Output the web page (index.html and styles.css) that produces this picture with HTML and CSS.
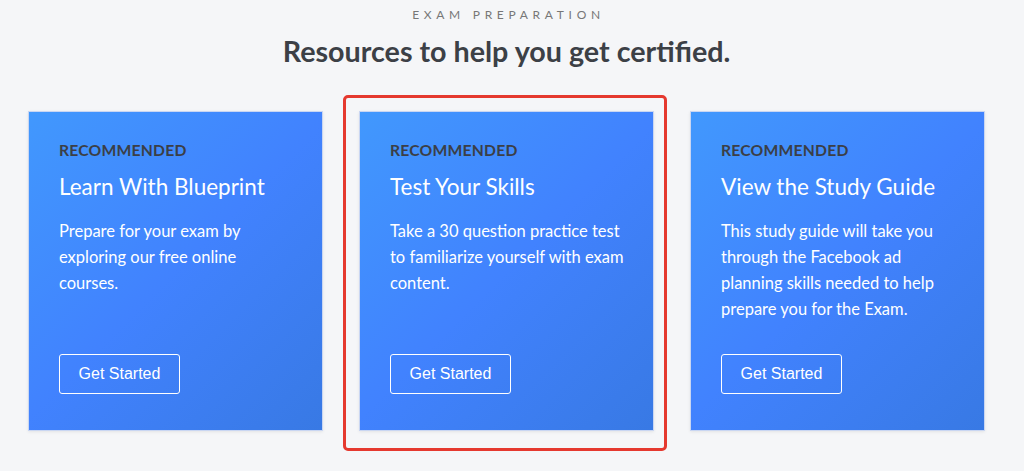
FILE: index.html
```html
<!DOCTYPE html>
<html lang="en">
<head>
<meta charset="utf-8">
<title>Exam Preparation</title>
<link rel="stylesheet" href="styles.css">
</head>
<body>
<main class="page">
  <p class="eyebrow">EXAM PREPARATION</p>
  <h1 class="headline">Resources to help you get certified.</h1>
  <section class="cards">
    <article class="card">
      <p class="tag">RECOMMENDED</p>
      <h2 class="card-title">Learn With Blueprint</h2>
      <p class="card-text">Prepare for your exam by exploring our free online courses.</p>
      <a class="btn" href="#">Get Started</a>
    </article>
    <div class="card-wrap">
      <article class="card">
        <p class="tag">RECOMMENDED</p>
        <h2 class="card-title">Test Your Skills</h2>
        <p class="card-text">Take a 30 question practice test to familiarize yourself with exam content.</p>
        <a class="btn" href="#">Get Started</a>
      </article>
      <div class="highlight"></div>
    </div>
    <article class="card">
      <p class="tag">RECOMMENDED</p>
      <h2 class="card-title">View the Study Guide</h2>
      <p class="card-text">This study guide will take you through the Facebook ad planning skills needed to help prepare you for the Exam.</p>
      <a class="btn" href="#">Get Started</a>
    </article>
  </section>
</main>
</body>
</html>
```

FILE: styles.css
```css
* { box-sizing: border-box; }
html, body { margin: 0; padding: 0; }
body {
  background: #f5f6f8;
  font-family: "Lato", "Open Sans", sans-serif;
  width: 1024px;
  height: 471px;
  overflow: hidden;
}
.page {
  display: flex;
  flex-direction: column;
  align-items: center;
  padding: 0 11px 0 0;
}
.eyebrow {
  margin: 8px 0 0 0;
  font-size: 12px;
  line-height: 14px;
  letter-spacing: 4.7px;
  color: #777777;
  font-weight: 400;
  padding-left: 4px;
}
.headline {
  margin: 11px 0 0 0;
  font-size: 28.7px;
  line-height: 36px;
  font-weight: 700;
  color: #3c4046;
}
.cards {
  display: flex;
  gap: 36px;
  margin-top: 42px;
}
.card-wrap { position: relative; display: flex; }
.card {
  width: 295px;
  height: 320px;
  padding: 29px 20px 0 30px;
  background: linear-gradient(135deg, #4198fd 0%, #4182fe 50%, #3879e4 100%);
  border: 1px solid #c9d6f2;
  box-shadow: 0 1px 3px rgba(0,0,0,0.08);
  display: flex;
  flex-direction: column;
  align-items: flex-start;
}
.tag {
  margin: 0;
  font-size: 15.7px;
  line-height: 18px;
  font-weight: 700;
  color: #3b3f46;
  letter-spacing: 0.2px;
}
.card-title {
  margin: 15px 0 0 0;
  font-size: 22.5px;
  line-height: 26px;
  font-weight: 400;
  color: #ffffff;
}
.card-text {
  margin: 18px 0 0 0;
  width: 236px;
  font-size: 16.5px;
  line-height: 26px;
  color: #ffffff;
  font-weight: 400;
}
.btn {
  margin-top: auto;
  margin-bottom: 36px;
  width: 121px;
  height: 40px;
  border: 1.5px solid #ffffff;
  border-radius: 3px;
  display: flex;
  align-items: center;
  justify-content: center;
  font-family: "Liberation Sans", Arial, sans-serif;
  font-size: 16px;
  color: #ffffff;
  text-decoration: none;
}
.highlight {
  position: absolute;
  left: -16px;
  top: -16px;
  right: -13px;
  bottom: -20px;
  border: 3px solid #e5392f;
  border-radius: 5px;
  pointer-events: none;
}
```
